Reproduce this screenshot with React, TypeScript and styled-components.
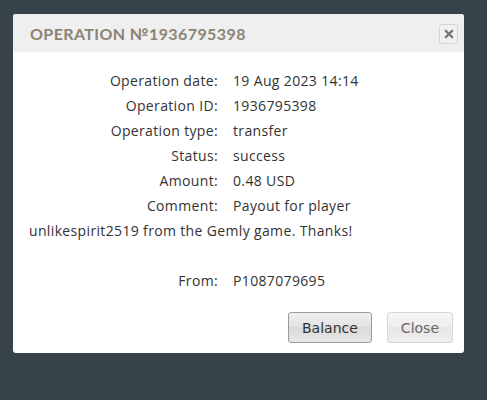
import styled, { createGlobalStyle } from "styled-components";

const GlobalStyle = createGlobalStyle`
  html, body {
    margin: 0;
    padding: 0;
    background: #36434b;
  }
`;

const Page = styled.div`
  width: 487px;
  height: 400px;
  padding: 14px 0 0 13px;
  box-sizing: border-box;
  background: #36434b;
`;

const Dialog = styled.div`
  width: 451px;
  height: 339px;
  background: #ffffff;
  border-radius: 3px;
  display: flex;
  flex-direction: column;
  overflow: hidden;
`;

const Header = styled.div`
  height: 38px;
  background: #efefef;
  display: flex;
  align-items: center;
  justify-content: space-between;
  padding: 0 6px 0 17px;
  box-sizing: border-box;
`;

const Title = styled.div`
  font-family: "Lato", sans-serif;
  font-size: 16px;
  font-weight: 700;
  letter-spacing: 0.4px;
  color: #8b8476;
`;

const CloseX = styled.button`
  width: 19px;
  height: 20px;
  padding: 0;
  border: 1px solid #d3d3d3;
  border-radius: 3px;
  background: #f0f0f0;
  display: flex;
  align-items: center;
  justify-content: center;
  margin-top: 2px;
`;

const Body = styled.div`
  flex: 1;
  padding: 16px 16px 0 16px;
  font-family: "Open Sans", sans-serif;
  font-size: 14px;
  letter-spacing: 0.35px;
  line-height: 25px;
  color: #333;
`;

const Row = styled.div<{ $spaced?: boolean }>`
  margin-top: ${(p) => (p.$spaced ? "25px" : "0")};
`;

const Label = styled.span`
  display: inline-block;
  width: 189px;
  text-align: right;
  margin-right: 15px;
`;

const Footer = styled.div`
  display: flex;
  justify-content: flex-end;
  gap: 15px;
  padding: 0 11px 10px 0;
`;

const Button = styled.button<{ $primary?: boolean }>`
  height: 31px;
  padding: 0 13px;
  font-family: "DejaVu Sans", Verdana, sans-serif;
  font-size: 14px;
  border-radius: 3px;
  border: 1px solid ${(p) => (p.$primary ? "#9a9a9a" : "#d6d6d6")};
  color: ${(p) => (p.$primary ? "#333" : "#666")};
  background: ${(p) =>
    p.$primary
      ? "linear-gradient(#f0f0f0, #e2e2e2 50%, #dadada 50%, #e6e6e6)"
      : "linear-gradient(#f6f6f6, #ededed 50%, #e6e6e6 50%, #efefef)"};
`;

const rows: [string, string][] = [
  ["Operation date:", "19 Aug 2023 14:14"],
  ["Operation ID:", "1936795398"],
  ["Operation type:", "transfer"],
  ["Status:", "success"],
  ["Amount:", "0.48 USD"],
  ["Comment:", "Payout for player unlikespirit2519 from the Gemly game. Thanks!"],
];

export default function App() {
  return (
    <>
      <GlobalStyle />
      <Page>
        <Dialog>
          <Header>
            <Title>OPERATION №1936795398</Title>
            <CloseX>
              <svg width="10" height="10" viewBox="0 0 10 10">
                <path d="M2 2 L8 8 M8 2 L2 8" stroke="#777" strokeWidth="2.4" strokeLinecap="square" />
              </svg>
            </CloseX>
          </Header>
          <Body>
            {rows.map(([k, v]) => (
              <Row key={k}>
                <Label>{k}</Label>
                {v}
              </Row>
            ))}
            <Row $spaced>
              <Label>From:</Label>
              P1087079695
            </Row>
          </Body>
          <Footer>
            <Button $primary>Balance</Button>
            <Button>Close</Button>
          </Footer>
        </Dialog>
      </Page>
    </>
  );
}
